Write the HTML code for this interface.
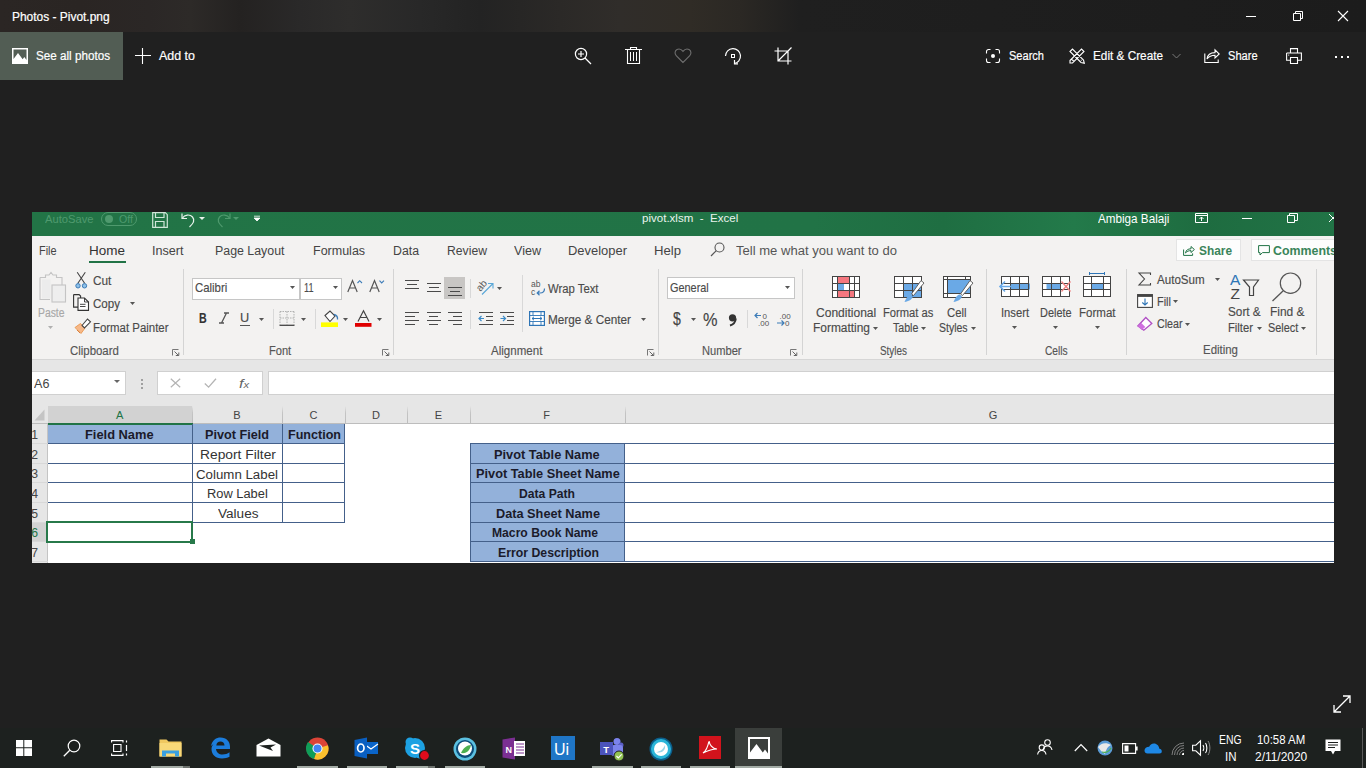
<!DOCTYPE html>
<html><head><meta charset="utf-8"><style>
html,body{margin:0;padding:0;}
body{width:1366px;height:768px;overflow:hidden;position:relative;background:#202020;font-family:"Liberation Sans",sans-serif;}
.t{position:absolute;white-space:nowrap;transform-origin:0 0;}
svg{overflow:visible;}
</style></head><body>
<div style="position:absolute;left:0px;top:0px;width:1366px;height:32px;background:linear-gradient(90deg,#2b2624 0px,#2a2523 80px,#2b2726 150px,#2d2a28 190px,#242221 240px,#2a2929 300px,#2e2d2c 350px,#282828 420px,#232323 480px,#2b2927 560px,#302d2a 620px,#302c26 690px,#2b2824 740px,#1f1f1f 800px,#1c1c1c 1366px);"></div>
<div class="t" style="left:12.30px;top:12.00px;font-size:11.92px;line-height:11.92px;color:#ffffff;font-weight:400;transform:scaleX(1.0032);-webkit-text-stroke:0.2px #fff;">Photos - Pivot.png</div>
<svg style="position:absolute;left:1246px;top:16px;" width="10" height="1" viewBox="0 0 10 1"><rect x="0" y="0" width="10" height="1" fill="#fff"/></svg>
<svg style="position:absolute;left:1291px;top:10px;" width="12" height="12" viewBox="0 0 12 12"><path d="M2.5 3.5h7v7h-7z M4.5 3.5v-2h7v7h-2" fill="none" stroke="#fff" stroke-width="1"/></svg>
<svg style="position:absolute;left:1337px;top:10px;" width="12" height="12" viewBox="0 0 12 12"><path d="M1 1L11 11M11 1L1 11" stroke="#fff" stroke-width="1.1"/></svg>
<div style="position:absolute;left:0px;top:32px;width:123px;height:48px;background:#525d54;"></div>
<svg style="position:absolute;left:12px;top:48px;" width="16" height="16" viewBox="0 0 16 16"><rect x="0" y="0" width="16" height="16" fill="#fff"/><path d="M1.5 1.5h13v10.5l-2.2-3-1.6 2.2L6 5 1.5 11z" fill="#525d54"/></svg>
<div class="t" style="left:36.00px;top:49.00px;font-size:13.08px;line-height:13.08px;color:#ffffff;font-weight:400;transform:scaleX(0.8925);-webkit-text-stroke:0.2px #fff;">See all photos</div>
<svg style="position:absolute;left:135px;top:48px;" width="16" height="16" viewBox="0 0 16 16"><path d="M7.5 0v16M0 7.5h16" stroke="#fff" stroke-width="1.1"/></svg>
<div class="t" style="left:159.00px;top:49.00px;font-size:13.08px;line-height:13.08px;color:#ffffff;font-weight:400;transform:scaleX(0.9519);-webkit-text-stroke:0.2px #fff;">Add to</div>
<svg style="position:absolute;left:574px;top:47px;" width="18" height="18" viewBox="0 0 18 18"><circle cx="7" cy="7" r="5.6" fill="none" stroke="#fff" stroke-width="1.2"/><path d="M7 4v6M4 7h6" stroke="#fff" stroke-width="1.2"/><path d="M11 11l6 6" stroke="#fff" stroke-width="1.3"/></svg>
<svg style="position:absolute;left:625px;top:47px;" width="17" height="18" viewBox="0 0 17 18"><path d="M5.5 2.5V0.5h6v2M0 2.5h17M2.5 2.5v14h12v-14" fill="none" stroke="#fff" stroke-width="1.1"/><path d="M5.5 5v9M8.5 5v9M11.5 5v9" stroke="#fff" stroke-width="1"/></svg>
<svg style="position:absolute;left:674px;top:47px;" width="18" height="18" viewBox="0 0 18 18"><path d="M9 15.5L2.2 8.6C0.4 6.8 0.8 3.6 3 2.5 5 1.5 7.4 2.3 9 4.4 10.6 2.3 13 1.5 15 2.5 17.2 3.6 17.6 6.8 15.8 8.6z" fill="none" stroke="#6e6e6e" stroke-width="1.1"/></svg>
<svg style="position:absolute;left:724px;top:47px;" width="18" height="18" viewBox="0 0 18 18"><path d="M1.5 9A7.5 7.5 0 1 1 10 16.5" fill="none" stroke="#fff" stroke-width="1.2"/><path d="M10.5 13v3.8h3.5" fill="none" stroke="#fff" stroke-width="1.2"/><rect x="7.5" y="7.5" width="3" height="3" fill="none" stroke="#fff" stroke-width="1"/></svg>
<svg style="position:absolute;left:774px;top:47px;" width="18" height="18" viewBox="0 0 18 18"><path d="M4 0.5v13.5h13.5M0.5 4h13.5v13.5M17.5 0.5L4 14" fill="none" stroke="#fff" stroke-width="1.2"/></svg>
<svg style="position:absolute;left:986px;top:49px;" width="14" height="14" viewBox="0 0 14 14"><path d="M0.5 4.5V2.5a2 2 0 0 1 2-2h2M9.5 0.5h2a2 2 0 0 1 2 2v2M13.5 9.5v2a2 2 0 0 1-2 2h-2M4.5 13.5h-2a2 2 0 0 1-2-2v-2" fill="none" stroke="#fff" stroke-width="1.1"/><circle cx="7" cy="7" r="2" fill="#fff"/></svg>
<div class="t" style="left:1009.00px;top:49.00px;font-size:13.08px;line-height:13.08px;color:#ffffff;font-weight:400;transform:scaleX(0.8446);-webkit-text-stroke:0.2px #fff;">Search</div>
<svg style="position:absolute;left:1069px;top:48px;" width="16" height="16" viewBox="0 0 16 16"><path d="M1 3.5L3.5 1l11 11 0.8 3.3-3.3-0.8z M12 12.5L12.5 12M1 12.5L12.5 1 15 3.5 3.5 15H1z M2.5 11l2.5 2.5" fill="none" stroke="#fff" stroke-width="1.1"/></svg>
<div class="t" style="left:1093.00px;top:49.00px;font-size:13.08px;line-height:13.08px;color:#ffffff;font-weight:400;transform:scaleX(0.8998);-webkit-text-stroke:0.2px #fff;">Edit &amp; Create</div>
<svg style="position:absolute;left:1172px;top:53px;" width="9" height="6" viewBox="0 0 9 6"><path d="M0.5 1l4 4 4-4" fill="none" stroke="#7a7a7a" stroke-width="1"/></svg>
<svg style="position:absolute;left:1204px;top:48px;" width="16" height="15" viewBox="0 0 16 15"><path d="M0.8 5.5v9h13.4v-3M3 11c0.5-4 3.2-6.4 8-6.4V1.8l4.2 4.2L11 10V7.2c-3.5 0-6 1-8 3.8z" fill="none" stroke="#fff" stroke-width="1.1"/></svg>
<div class="t" style="left:1228.00px;top:49.00px;font-size:13.08px;line-height:13.08px;color:#ffffff;font-weight:400;transform:scaleX(0.8481);-webkit-text-stroke:0.2px #fff;">Share</div>
<svg style="position:absolute;left:1286px;top:48px;" width="16" height="16" viewBox="0 0 16 16"><path d="M4.5 5V0.6h7V5M0.6 5h14.8v7.3H11.5M4.5 12.3H0.6V5M4.5 9.5h7v6h-7z" fill="none" stroke="#fff" stroke-width="1.1"/><rect x="2.2" y="6.6" width="1" height="1" fill="#fff"/></svg>
<div style="position:absolute;left:1335px;top:56px;width:2px;height:2px;background:#fff;"></div>
<div style="position:absolute;left:1341px;top:56px;width:2px;height:2px;background:#fff;"></div>
<div style="position:absolute;left:1347px;top:56px;width:2px;height:2px;background:#fff;"></div>
<svg style="position:absolute;left:1332px;top:694px;" width="20" height="20" viewBox="0 0 20 20"><path d="M2 18L18 2M11 2h7v7M2 11v7h7" fill="none" stroke="#fff" stroke-width="1.3"/></svg>
<div style="position:absolute;left:32px;top:212px;width:1302px;height:351px;background:#ffffff;overflow:hidden;"></div>
<div style="position:absolute;left:32px;top:212px;width:1302px;height:24px;background:linear-gradient(90deg,#227446 0%,#217346 60%,#1f6e42 70%,#237a4a 80%,#1e6c40 90%,#217346 100%);"></div>
<div class="t" style="left:45.00px;top:214.00px;font-size:11.05px;line-height:11.05px;color:#4f9a6e;font-weight:400;transform:scaleX(1.0126);">AutoSave</div>
<div style="position:absolute;left:101px;top:212px;width:36px;height:14px;border:1.3px solid #4f9a6e;border-radius:8px;box-sizing:border-box;"></div>
<div style="position:absolute;left:105px;top:215px;width:8px;height:8px;background:#4f9a6e;border-radius:50%;"></div>
<div class="t" style="left:119.00px;top:215.00px;font-size:10.17px;line-height:10.17px;color:#4f9a6e;font-weight:400;transform:scaleX(1.0440);">Off</div>
<svg style="position:absolute;left:152px;top:212px;" width="16" height="16" viewBox="0 0 16 16"><path d="M0.7 0.7h12.6l2 2v12.6H0.7z M3.5 0.7v4.8h8.5V0.7 M3.5 15.3V9.5h8.5v5.8" fill="none" stroke="#cfe6d8" stroke-width="1.2"/></svg>
<svg style="position:absolute;left:180px;top:212px;" width="18" height="16" viewBox="0 0 18 16"><path d="M2 1.5v5h5" fill="none" stroke="#e8f3ec" stroke-width="1.2"/><path d="M2.5 6C4.5 2.5 10 2 12.5 5c2.3 2.8 1.5 6-3 10" fill="none" stroke="#e8f3ec" stroke-width="1.2"/></svg>
<svg style="position:absolute;left:199px;top:217px;" width="6" height="3" viewBox="0 0 6 3"><path d="M0 0h6L3 3z" fill="#e8f3ec"/></svg>
<svg style="position:absolute;left:214px;top:212px;" width="18" height="16" viewBox="0 0 18 16"><path d="M16 1.5v5h-5" fill="none" stroke="#4f9a6e" stroke-width="1.2"/><path d="M15.5 6C13.5 2.5 8 2 5.5 5c-2.3 2.8-1.5 6 3 10" fill="none" stroke="#4f9a6e" stroke-width="1.2"/></svg>
<svg style="position:absolute;left:233px;top:217px;" width="6" height="3" viewBox="0 0 6 3"><path d="M0 0h6L3 3z" fill="#4f9a6e"/></svg>
<svg style="position:absolute;left:254px;top:215px;" width="6" height="8" viewBox="0 0 6 8"><path d="M0 1.2h6M0 3h6L3 6z" fill="#fff" stroke="#fff" stroke-width="0.8"/></svg>
<div class="t" style="left:642.40px;top:213.00px;font-size:11.05px;line-height:11.05px;color:#eaf4ee;font-weight:400;transform:scaleX(1.0448);">pivot.xlsm&nbsp; - &nbsp;Excel</div>
<div class="t" style="left:1098.00px;top:214.00px;font-size:11.92px;line-height:11.92px;color:#ffffff;font-weight:400;transform:scaleX(0.9812);">Ambiga Balaji</div>
<svg style="position:absolute;left:1195px;top:213px;" width="13" height="10" viewBox="0 0 13 10"><path d="M0.5 0.5h12v9h-12z M0.5 2.5h12 M6.5 8V4M4.5 6l2-2 2 2" fill="none" stroke="#fff" stroke-width="1"/></svg>
<div style="position:absolute;left:1242px;top:218px;width:10px;height:1px;background:#fff;"></div>
<svg style="position:absolute;left:1287px;top:213px;" width="11" height="10" viewBox="0 0 11 10"><path d="M0.5 2.5h7v7h-7z M2.5 2.5v-2h8v7h-3" fill="none" stroke="#fff" stroke-width="1"/></svg>
<svg style="position:absolute;left:1328px;top:213px;" width="6" height="10" viewBox="0 0 6 10"><path d="M1 1l8 8M9 1L1 9" stroke="#fff" stroke-width="1"/></svg>
<div style="position:absolute;left:32px;top:236px;width:1302px;height:123px;background:#f3f2f1;"></div>
<div class="t" style="left:39.40px;top:245.00px;font-size:12.50px;line-height:12.50px;color:#444444;font-weight:400;transform:scaleX(0.8740);">File</div>
<div class="t" style="left:89.00px;top:245.00px;font-size:12.50px;line-height:12.50px;color:#333333;font-weight:400;transform:scaleX(1.0795);">Home</div>
<div class="t" style="left:152.00px;top:245.00px;font-size:12.50px;line-height:12.50px;color:#444444;font-weight:400;transform:scaleX(1.0076);">Insert</div>
<div class="t" style="left:214.80px;top:245.00px;font-size:12.50px;line-height:12.50px;color:#444444;font-weight:400;transform:scaleX(0.9900);">Page Layout</div>
<div class="t" style="left:313.00px;top:245.00px;font-size:12.50px;line-height:12.50px;color:#444444;font-weight:400;">Formulas</div>
<div class="t" style="left:393.00px;top:245.00px;font-size:12.50px;line-height:12.50px;color:#444444;font-weight:400;transform:scaleX(0.9844);">Data</div>
<div class="t" style="left:447.00px;top:245.00px;font-size:12.50px;line-height:12.50px;color:#444444;font-weight:400;transform:scaleX(0.9750);">Review</div>
<div class="t" style="left:514.00px;top:245.00px;font-size:12.50px;line-height:12.50px;color:#444444;font-weight:400;transform:scaleX(1.0037);">View</div>
<div class="t" style="left:568.00px;top:245.00px;font-size:12.50px;line-height:12.50px;color:#444444;font-weight:400;transform:scaleX(1.0355);">Developer</div>
<div class="t" style="left:654.00px;top:245.00px;font-size:12.50px;line-height:12.50px;color:#444444;font-weight:400;transform:scaleX(1.0501);">Help</div>
<div style="position:absolute;left:89px;top:260.6px;width:37px;height:2.6px;background:#217346;"></div>
<svg style="position:absolute;left:710px;top:242px;" width="15" height="15" viewBox="0 0 15 15"><circle cx="9.5" cy="5.5" r="4.5" fill="none" stroke="#555" stroke-width="1.1"/><path d="M6.3 8.7L1 14" stroke="#555" stroke-width="1.2"/></svg>
<div class="t" style="left:736.00px;top:245.00px;font-size:12.50px;line-height:12.50px;color:#555555;font-weight:400;transform:scaleX(1.0438);">Tell me what you want to do</div>
<div style="position:absolute;left:1176px;top:239.4px;width:65.4px;height:22px;background:#fdfdfd;border:1px solid #e4e4e4;box-sizing:border-box;"></div>
<svg style="position:absolute;left:1183px;top:245px;" width="12" height="11" viewBox="0 0 12 11"><path d="M0.6 4.5v5.9h9v-2M2.5 8C3 5 5 3.8 8 3.8V1.5l3.4 3-3.4 3V5.6C5.6 5.6 4 6.3 2.5 8z" fill="none" stroke="#217346" stroke-width="1"/></svg>
<div class="t" style="left:1199.00px;top:245.00px;font-size:12.21px;line-height:12.21px;color:#3a845a;font-weight:700;transform:scaleX(0.9726);">Share</div>
<div style="position:absolute;left:1251px;top:239.4px;width:90px;height:22px;background:#fdfdfd;border:1px solid #e4e4e4;box-sizing:border-box;"></div>
<svg style="position:absolute;left:1258px;top:245px;" width="12" height="11" viewBox="0 0 12 11"><path d="M0.6 0.6h10.8v7H4.5L2 10V7.6H0.6z" fill="none" stroke="#217346" stroke-width="1"/></svg>
<div class="t" style="left:1273.00px;top:245.00px;font-size:12.21px;line-height:12.21px;color:#3a845a;font-weight:700;transform:scaleX(1.0143);">Comments</div>
<div style="position:absolute;left:1334px;top:236px;width:32px;height:30px;background:#202020;"></div>
<svg style="position:absolute;left:39px;top:272px;" width="28" height="31" viewBox="0 0 28 31"><path d="M1 5.5h5.5V3h3.5l2-2.5 2 2.5h3.5v2.5H23V14" fill="none" stroke="#c4c4c4" stroke-width="1.1"/><path d="M1 5.5v22h10" fill="none" stroke="#c4c4c4" stroke-width="1.1"/><rect x="13" y="13" width="13.5" height="17" fill="#eeeeee" stroke="#c4c4c4" stroke-width="1.1"/><rect x="3" y="7.5" width="8.5" height="19" fill="#ececec"/></svg>
<div class="t" style="left:37.50px;top:307.00px;font-size:12.21px;line-height:12.21px;color:#a8a8a8;font-weight:400;transform:scaleX(0.8488);-webkit-text-stroke:0.15px #a8a8a8;">Paste</div>
<svg style="position:absolute;left:47.5px;top:326.3px;" width="5" height="3" viewBox="0 0 5 3"><path d="M0 0h5L2.5 3z" fill="#b0b0b0"/></svg>
<svg style="position:absolute;left:75px;top:272px;" width="13" height="17" viewBox="0 0 13 17"><path d="M2.2 0.3L9.8 11.5M10.3 0.3L2.7 11.5" stroke="#444" stroke-width="1.1"/><circle cx="3" cy="13.8" r="2.2" fill="#8fc1e8" stroke="#3d7cb8" stroke-width="1"/><circle cx="9.5" cy="13.8" r="2.2" fill="#8fc1e8" stroke="#3d7cb8" stroke-width="1"/></svg>
<div class="t" style="left:93.00px;top:275.00px;font-size:12.21px;line-height:12.21px;color:#4a4a4a;font-weight:400;transform:scaleX(0.9685);-webkit-text-stroke:0.15px #4a4a4a;">Cut</div>
<svg style="position:absolute;left:73px;top:294px;" width="17" height="17" viewBox="0 0 17 17"><path d="M0.6 0.6h5.5l1.5 1.5V4 M0.6 0.6v12.5h5" fill="none" stroke="#333" stroke-width="1.1"/><path d="M5 4h6.5l4 4v8.4H5z" fill="#fff" stroke="#333" stroke-width="1.1"/><path d="M7 10.3h5.5M7 12.5h5.5M11.5 4v4h4" fill="none" stroke="#333" stroke-width="0.9"/></svg>
<div class="t" style="left:93.00px;top:298.00px;font-size:12.21px;line-height:12.21px;color:#4a4a4a;font-weight:400;transform:scaleX(0.9475);-webkit-text-stroke:0.15px #4a4a4a;">Copy</div>
<svg style="position:absolute;left:129.8px;top:302.2px;" width="5" height="3" viewBox="0 0 5 3"><path d="M0 0h5L2.5 3z" fill="#555"/></svg>
<svg style="position:absolute;left:74px;top:318px;" width="17" height="16" viewBox="0 0 17 16"><path d="M1 9.5L6.5 5.5 11 10 7 15.5z" fill="#f6b889"/><path d="M1 9.5L6.5 5.5 11 10 7 15.5z" fill="none" stroke="#e8964f" stroke-width="0.9"/><path d="M3 12l3 3" stroke="#d9823f" stroke-width="1"/><path d="M8 7.5l5.5-6.5 3 2.8-6 6.2z" fill="#fff" stroke="#444" stroke-width="1.1"/></svg>
<div class="t" style="left:93.20px;top:322.00px;font-size:12.21px;line-height:12.21px;color:#4a4a4a;font-weight:400;transform:scaleX(0.9351);-webkit-text-stroke:0.15px #4a4a4a;">Format Painter</div>
<div class="t" style="left:69.80px;top:345.00px;font-size:12.21px;line-height:12.21px;color:#555555;font-weight:400;transform:scaleX(0.9339);-webkit-text-stroke:0.15px #555555;">Clipboard</div>
<svg style="position:absolute;left:172px;top:348.5px;" width="8" height="7" viewBox="0 0 8 7"><path d="M0.5 6.5V0.5h6" fill="none" stroke="#777" stroke-width="1"/><path d="M2.5 2.5l4 4M3.8 6.5h3v-3" fill="none" stroke="#666" stroke-width="1"/></svg>
<div style="position:absolute;left:183px;top:269px;width:1px;height:86px;background:#d4d4d4;"></div>
<div style="position:absolute;left:192px;top:277.5px;width:108px;height:22px;background:#fff;border:1px solid #c6c6c6;box-sizing:border-box;"></div>
<div style="position:absolute;left:300px;top:277.5px;width:42px;height:22px;background:#fff;border:1px solid #c6c6c6;box-sizing:border-box;"></div>
<div class="t" style="left:195.00px;top:282.00px;font-size:12.79px;line-height:12.79px;color:#4a4a4a;font-weight:400;transform:scaleX(0.8911);-webkit-text-stroke:0.15px #4a4a4a;">Calibri</div>
<svg style="position:absolute;left:290.2px;top:286.3px;" width="5" height="3" viewBox="0 0 5 3"><path d="M0 0h5L2.5 3z" fill="#555"/></svg>
<div class="t" style="left:304.00px;top:282.00px;font-size:12.79px;line-height:12.79px;color:#4a4a4a;font-weight:400;transform:scaleX(0.7155);-webkit-text-stroke:0.15px #4a4a4a;">11</div>
<svg style="position:absolute;left:332.5px;top:286.3px;" width="5" height="3" viewBox="0 0 5 3"><path d="M0 0h5L2.5 3z" fill="#555"/></svg>
<svg style="position:absolute;left:347px;top:279px;" width="16" height="14" viewBox="0 0 16 14"><path d="M0.8 13L5.5 1.5 10.2 13M2.5 9h6" fill="none" stroke="#555" stroke-width="1.2"/><path d="M10.5 4l2.2-2.3L15 4" fill="none" stroke="#3d7cb8" stroke-width="1.1"/></svg>
<svg style="position:absolute;left:369px;top:279px;" width="16" height="14" viewBox="0 0 16 14"><path d="M0.8 13L5.5 1.5 10.2 13M2.5 9h6" fill="none" stroke="#555" stroke-width="1.2"/><path d="M10.5 1.7l2.2 2.3L15 1.7" fill="none" stroke="#3d7cb8" stroke-width="1.1"/></svg>
<div class="t" style="left:198.80px;top:311.00px;font-size:14.53px;line-height:14.53px;color:#333;font-weight:700;transform:scaleX(0.7337);-webkit-text-stroke:0.15px #333;">B</div>
<svg style="position:absolute;left:219px;top:312px;" width="10" height="12" viewBox="0 0 10 12"><path d="M5 1h5M0 11h5M7.5 1L2.5 11" stroke="#555" stroke-width="1.3"/></svg>
<div class="t" style="left:240.40px;top:311.00px;font-size:13.66px;line-height:13.66px;color:#4a4a4a;font-weight:400;transform:scaleX(0.9326);-webkit-text-stroke:0.15px #4a4a4a;">U</div>
<div style="position:absolute;left:240px;top:324.5px;width:10px;height:1.2px;background:#555;"></div>
<svg style="position:absolute;left:258.9px;top:317.5px;" width="5" height="3" viewBox="0 0 5 3"><path d="M0 0h5L2.5 3z" fill="#555"/></svg>
<div style="position:absolute;left:272.7px;top:309.4px;width:1px;height:19.200000000000045px;background:#d8d8d8;"></div>
<svg style="position:absolute;left:279px;top:310px;" width="16" height="16" viewBox="0 0 16 16"><path d="M1 1.5h14M1 8h14M8 1.5v13M1 1.5v13M15 1.5v13" fill="none" stroke="#aaa" stroke-width="0.9" stroke-dasharray="1.5 1"/><path d="M0.5 15.3h15" stroke="#444" stroke-width="1.3"/></svg>
<svg style="position:absolute;left:300.9px;top:317.5px;" width="5" height="3" viewBox="0 0 5 3"><path d="M0 0h5L2.5 3z" fill="#555"/></svg>
<div style="position:absolute;left:314.6px;top:309.4px;width:1px;height:19.200000000000045px;background:#d8d8d8;"></div>
<svg style="position:absolute;left:321px;top:310px;" width="18" height="17" viewBox="0 0 18 17"><path d="M4 5.5l5-4.5 5 5-5 5.5z" fill="#fff" stroke="#444" stroke-width="1.1"/><path d="M13 4.5c2.5 0.5 3.8 2.5 3.5 5" fill="none" stroke="#3d7cb8" stroke-width="1.3"/><rect x="0" y="12.4" width="17" height="4.6" fill="#ffff00"/></svg>
<svg style="position:absolute;left:343.2px;top:317.5px;" width="5" height="3" viewBox="0 0 5 3"><path d="M0 0h5L2.5 3z" fill="#555"/></svg>
<svg style="position:absolute;left:355px;top:310px;" width="17" height="17" viewBox="0 0 17 17"><path d="M3 11.5L8.5 0.8 14 11.5M5 7.5h7" fill="none" stroke="#444" stroke-width="1.2"/><rect x="0" y="13" width="16.5" height="3.8" fill="#e00000"/></svg>
<svg style="position:absolute;left:377.1px;top:317.5px;" width="5" height="3" viewBox="0 0 5 3"><path d="M0 0h5L2.5 3z" fill="#555"/></svg>
<div class="t" style="left:268.80px;top:345.00px;font-size:12.21px;line-height:12.21px;color:#555555;font-weight:400;transform:scaleX(0.9087);-webkit-text-stroke:0.15px #555555;">Font</div>
<svg style="position:absolute;left:381.5px;top:348.5px;" width="8" height="7" viewBox="0 0 8 7"><path d="M0.5 6.5V0.5h6" fill="none" stroke="#777" stroke-width="1"/><path d="M2.5 2.5l4 4M3.8 6.5h3v-3" fill="none" stroke="#666" stroke-width="1"/></svg>
<div style="position:absolute;left:392.5px;top:269px;width:1px;height:86px;background:#d4d4d4;"></div>
<div style="position:absolute;left:405px;top:280px;width:14px;height:1.3px;background:#4a4a4a;"></div>
<div style="position:absolute;left:407px;top:284px;width:10px;height:1.3px;background:#4a4a4a;"></div>
<div style="position:absolute;left:405px;top:288px;width:14px;height:1.3px;background:#4a4a4a;"></div>
<div style="position:absolute;left:426.5px;top:283px;width:14.0px;height:1.3px;background:#4a4a4a;"></div>
<div style="position:absolute;left:428.5px;top:287px;width:10.0px;height:1.3px;background:#4a4a4a;"></div>
<div style="position:absolute;left:426.5px;top:291px;width:14.0px;height:1.3px;background:#4a4a4a;"></div>
<div style="position:absolute;left:444.2px;top:277px;width:21.3px;height:22px;background:#c8c6c4;"></div>
<div style="position:absolute;left:448px;top:287px;width:14px;height:1.3px;background:#4a4a4a;"></div>
<div style="position:absolute;left:450px;top:291px;width:10px;height:1.3px;background:#4a4a4a;"></div>
<div style="position:absolute;left:448px;top:295px;width:14px;height:1.3px;background:#4a4a4a;"></div>
<div style="position:absolute;left:469.7px;top:278.8px;width:1px;height:18.80000000000001px;background:#d8d8d8;"></div>
<svg style="position:absolute;left:477px;top:279px;" width="18" height="17" viewBox="0 0 18 17"><text x="0" y="0" font-size="10" fill="#555" transform="translate(3.5 13) rotate(-50)" font-family="Liberation Sans">ab</text><path d="M5 15.5L15.5 5M11 4.5h5v5" fill="none" stroke="#5aa8d8" stroke-width="1.1"/></svg>
<svg style="position:absolute;left:496.8px;top:286.5px;" width="5" height="3" viewBox="0 0 5 3"><path d="M0 0h5L2.5 3z" fill="#555"/></svg>
<div style="position:absolute;left:521.8px;top:275px;width:1px;height:57px;background:#d8d8d8;"></div>
<svg style="position:absolute;left:531px;top:280px;" width="15" height="16" viewBox="0 0 15 16"><text x="0" y="7" font-size="8.5" fill="#555" font-family="Liberation Sans">ab</text><text x="0" y="14.5" font-size="8.5" fill="#555" font-family="Liberation Sans">c</text><path d="M13.5 8.5c0 3-1 4.5-4.5 4.5H6.5M8.5 10.8L6.2 13l2.3 2.2" fill="none" stroke="#3d7cb8" stroke-width="1.2"/></svg>
<div class="t" style="left:548.00px;top:283.00px;font-size:12.50px;line-height:12.50px;color:#4a4a4a;font-weight:400;transform:scaleX(0.9048);-webkit-text-stroke:0.15px #4a4a4a;">Wrap Text</div>
<div style="position:absolute;left:405px;top:312px;width:14px;height:1.3px;background:#4a4a4a;"></div>
<div style="position:absolute;left:426.5px;top:312px;width:14.0px;height:1.3px;background:#4a4a4a;"></div>
<div style="position:absolute;left:448px;top:312px;width:14px;height:1.3px;background:#4a4a4a;"></div>
<div style="position:absolute;left:405px;top:316px;width:9.5px;height:1.3px;background:#4a4a4a;"></div>
<div style="position:absolute;left:429px;top:316px;width:9px;height:1.3px;background:#4a4a4a;"></div>
<div style="position:absolute;left:452.5px;top:316px;width:9.5px;height:1.3px;background:#4a4a4a;"></div>
<div style="position:absolute;left:405px;top:320px;width:14px;height:1.3px;background:#4a4a4a;"></div>
<div style="position:absolute;left:426.5px;top:320px;width:14.0px;height:1.3px;background:#4a4a4a;"></div>
<div style="position:absolute;left:448px;top:320px;width:14px;height:1.3px;background:#4a4a4a;"></div>
<div style="position:absolute;left:405px;top:324px;width:9.5px;height:1.3px;background:#4a4a4a;"></div>
<div style="position:absolute;left:429px;top:324px;width:9px;height:1.3px;background:#4a4a4a;"></div>
<div style="position:absolute;left:452.5px;top:324px;width:9.5px;height:1.3px;background:#4a4a4a;"></div>
<div style="position:absolute;left:470px;top:309.5px;width:1px;height:19.5px;background:#d8d8d8;"></div>
<div style="position:absolute;left:479px;top:312px;width:13.5px;height:1.3px;background:#4a4a4a;"></div>
<div style="position:absolute;left:485.5px;top:316px;width:7.0px;height:1.3px;background:#4a4a4a;"></div>
<div style="position:absolute;left:485.5px;top:320px;width:7.0px;height:1.3px;background:#4a4a4a;"></div>
<div style="position:absolute;left:479px;top:324px;width:13.5px;height:1.3px;background:#4a4a4a;"></div>
<svg style="position:absolute;left:478px;top:315px;" width="7" height="7" viewBox="0 0 7 7"><path d="M6 3.5H1M3.5 1L1 3.5 3.5 6" fill="none" stroke="#3d8cc8" stroke-width="1.2"/></svg>
<div style="position:absolute;left:500px;top:312px;width:14px;height:1.3px;background:#4a4a4a;"></div>
<div style="position:absolute;left:507px;top:316px;width:7px;height:1.3px;background:#4a4a4a;"></div>
<div style="position:absolute;left:507px;top:320px;width:7px;height:1.3px;background:#4a4a4a;"></div>
<div style="position:absolute;left:500px;top:324px;width:14px;height:1.3px;background:#4a4a4a;"></div>
<svg style="position:absolute;left:499.5px;top:315px;" width="7" height="7" viewBox="0 0 7 7"><path d="M0.5 3.5H5.5M3 1l2.5 2.5L3 6" fill="none" stroke="#3d8cc8" stroke-width="1.2"/></svg>
<svg style="position:absolute;left:529px;top:311px;" width="16" height="15" viewBox="0 0 16 15"><rect x="0.6" y="0.6" width="14.8" height="13.8" fill="#fff" stroke="#2e75b6" stroke-width="1.2"/><path d="M0.6 4.5h14.8M0.6 10.5h14.8M4 0.6v3.9M12 0.6v3.9M4 10.5v3.9M12 10.5v3.9" stroke="#2e75b6" stroke-width="0.9"/><path d="M3 7.5h10M5 5.8L3 7.5l2 1.7M11 5.8l2 1.7-2 1.7" fill="none" stroke="#2e75b6" stroke-width="1"/></svg>
<div class="t" style="left:548.00px;top:314.00px;font-size:12.50px;line-height:12.50px;color:#4a4a4a;font-weight:400;transform:scaleX(0.9406);-webkit-text-stroke:0.15px #4a4a4a;">Merge &amp; Center</div>
<svg style="position:absolute;left:640.5px;top:318.2px;" width="5" height="3" viewBox="0 0 5 3"><path d="M0 0h5L2.5 3z" fill="#555"/></svg>
<div class="t" style="left:491.40px;top:345.00px;font-size:12.21px;line-height:12.21px;color:#555555;font-weight:400;transform:scaleX(0.9467);-webkit-text-stroke:0.15px #555555;">Alignment</div>
<svg style="position:absolute;left:647px;top:348.5px;" width="8" height="7" viewBox="0 0 8 7"><path d="M0.5 6.5V0.5h6" fill="none" stroke="#777" stroke-width="1"/><path d="M2.5 2.5l4 4M3.8 6.5h3v-3" fill="none" stroke="#666" stroke-width="1"/></svg>
<div style="position:absolute;left:657.8px;top:269px;width:1px;height:86px;background:#d4d4d4;"></div>
<div style="position:absolute;left:666.5px;top:277px;width:128.2px;height:22.2px;background:#fff;border:1px solid #c6c6c6;box-sizing:border-box;"></div>
<div class="t" style="left:669.60px;top:282.00px;font-size:12.79px;line-height:12.79px;color:#4a4a4a;font-weight:400;transform:scaleX(0.8526);-webkit-text-stroke:0.15px #4a4a4a;">General</div>
<svg style="position:absolute;left:784.5px;top:286.3px;" width="5" height="3" viewBox="0 0 5 3"><path d="M0 0h5L2.5 3z" fill="#555"/></svg>
<div class="t" style="left:672.60px;top:311.00px;font-size:17.44px;line-height:17.44px;color:#444;font-weight:400;transform:scaleX(0.8043);-webkit-text-stroke:0.15px #444;">$</div>
<svg style="position:absolute;left:690.9px;top:317.8px;" width="5" height="3" viewBox="0 0 5 3"><path d="M0 0h5L2.5 3z" fill="#555"/></svg>
<div class="t" style="left:703.00px;top:310.00px;font-size:19.19px;line-height:19.19px;color:#444;font-weight:400;transform:scaleX(0.8501);-webkit-text-stroke:0.15px #444;">%</div>
<svg style="position:absolute;left:728px;top:314px;" width="9" height="12" viewBox="0 0 9 12"><circle cx="4.5" cy="3.8" r="3.6" fill="#333"/><path d="M7.8 4.5C7.5 8 5.5 10.5 2 11.5" fill="none" stroke="#333" stroke-width="2"/></svg>
<div style="position:absolute;left:747.4px;top:309.6px;width:1px;height:18.19999999999999px;background:#d8d8d8;"></div>
<svg style="position:absolute;left:754px;top:311px;" width="17" height="16" viewBox="0 0 17 16"><path d="M7 4.5H1M3.5 2L1 4.5 3.5 7" fill="none" stroke="#3d7cb8" stroke-width="1.2"/><text x="8.5" y="7.8" font-size="8" fill="#555" font-family="Liberation Sans">0</text><text x="4" y="14.5" font-size="8" fill="#555" font-family="Liberation Sans">.00</text></svg>
<svg style="position:absolute;left:775.5px;top:311px;" width="17" height="16" viewBox="0 0 17 16"><text x="3.5" y="7.5" font-size="8" fill="#555" font-family="Liberation Sans">.00</text><path d="M1 12h7M5.5 9.5L8 12l-2.5 2.5" fill="none" stroke="#3d7cb8" stroke-width="1.2"/><text x="9" y="14.8" font-size="8" fill="#555" font-family="Liberation Sans">0</text></svg>
<div class="t" style="left:702.00px;top:345.00px;font-size:12.21px;line-height:12.21px;color:#555555;font-weight:400;transform:scaleX(0.9118);-webkit-text-stroke:0.15px #555555;">Number</div>
<svg style="position:absolute;left:790.4px;top:348.5px;" width="8" height="7" viewBox="0 0 8 7"><path d="M0.5 6.5V0.5h6" fill="none" stroke="#777" stroke-width="1"/><path d="M2.5 2.5l4 4M3.8 6.5h3v-3" fill="none" stroke="#666" stroke-width="1"/></svg>
<div style="position:absolute;left:801.9px;top:269px;width:1px;height:86px;background:#d4d4d4;"></div>
<svg style="position:absolute;left:832px;top:276px;" width="28" height="22" viewBox="0 0 28 22"><rect x="0.5" y="0.5" width="27" height="21" fill="#fff"/><rect x="5" y="1" width="12.5" height="6.5" fill="#f4777f"/><rect x="5" y="14.5" width="17.5" height="7" fill="#f4777f"/><rect x="5" y="7.5" width="7" height="7" fill="#6aa9e6"/><path d="M0.5 0.5h27v21h-27z M0.5 7.5h27M0.5 14.5h27M5.5 0.5v21M17.5 0.5v21M22.5 0.5v21" stroke="#444" stroke-width="1" fill="none" shape-rendering="crispEdges"/></svg>
<div class="t" style="left:815.60px;top:307.00px;font-size:12.50px;line-height:12.50px;color:#4a4a4a;font-weight:400;transform:scaleX(0.9626);-webkit-text-stroke:0.15px #4a4a4a;">Conditional</div>
<div class="t" style="left:812.50px;top:322.00px;font-size:12.50px;line-height:12.50px;color:#4a4a4a;font-weight:400;transform:scaleX(0.9542);-webkit-text-stroke:0.15px #4a4a4a;">Formatting</div>
<svg style="position:absolute;left:872.5px;top:326.5px;" width="5" height="3" viewBox="0 0 5 3"><path d="M0 0h5L2.5 3z" fill="#555"/></svg>
<svg style="position:absolute;left:894px;top:276px;" width="31" height="27" viewBox="0 0 31 27"><rect x="0.5" y="0.5" width="27" height="21" fill="#fff"/><rect x="9.5" y="7.5" width="18" height="14" fill="#6aa9e6"/><path d="M0.5 0.5h27v21h-27z M0.5 7.5h27M0.5 14.5h27M9.5 0.5v21M18.5 0.5v21" stroke="#444" stroke-width="1" fill="none" shape-rendering="crispEdges"/><path d="M27 4.5L30 7 19.5 19.5 17.5 18z" fill="#fff" stroke="#555" stroke-width="0.9"/><path d="M17 18.5c-2.5 0-4 2-6.5 7.5 4-0.5 7.5-2.5 8.5-5.5z" fill="#6aa9e6"/></svg>
<div class="t" style="left:883.20px;top:307.00px;font-size:12.50px;line-height:12.50px;color:#4a4a4a;font-weight:400;transform:scaleX(0.8940);-webkit-text-stroke:0.15px #4a4a4a;">Format as</div>
<div class="t" style="left:892.90px;top:322.00px;font-size:12.50px;line-height:12.50px;color:#4a4a4a;font-weight:400;transform:scaleX(0.8465);-webkit-text-stroke:0.15px #4a4a4a;">Table</div>
<svg style="position:absolute;left:920.5px;top:326.5px;" width="5" height="3" viewBox="0 0 5 3"><path d="M0 0h5L2.5 3z" fill="#555"/></svg>
<svg style="position:absolute;left:943px;top:276px;" width="31" height="27" viewBox="0 0 31 27"><rect x="0.5" y="0.5" width="27" height="21" fill="#fff"/><rect x="5" y="4" width="22.5" height="13.5" fill="#6aa9e6"/><path d="M0.5 0.5h27v21h-27z M0.5 3.5h27M0.5 17.5h27M4.5 0.5v21M22.5 0.5v3" stroke="#444" stroke-width="1" fill="none" shape-rendering="crispEdges"/><path d="M27 4.5L30 7 19.5 19.5 17.5 18z" fill="#fff" stroke="#555" stroke-width="0.9"/><path d="M17 18.5c-2.5 0-4 2-6.5 7.5 4-0.5 7.5-2.5 8.5-5.5z" fill="#6aa9e6"/></svg>
<div class="t" style="left:947.40px;top:307.00px;font-size:12.50px;line-height:12.50px;color:#4a4a4a;font-weight:400;transform:scaleX(0.9054);-webkit-text-stroke:0.15px #4a4a4a;">Cell</div>
<div class="t" style="left:939.00px;top:322.00px;font-size:12.50px;line-height:12.50px;color:#4a4a4a;font-weight:400;transform:scaleX(0.8402);-webkit-text-stroke:0.15px #4a4a4a;">Styles</div>
<svg style="position:absolute;left:970.7px;top:326.5px;" width="5" height="3" viewBox="0 0 5 3"><path d="M0 0h5L2.5 3z" fill="#555"/></svg>
<div class="t" style="left:880.40px;top:345.00px;font-size:12.21px;line-height:12.21px;color:#555555;font-weight:400;transform:scaleX(0.8121);-webkit-text-stroke:0.15px #555555;">Styles</div>
<div style="position:absolute;left:985.7px;top:269px;width:1px;height:86px;background:#d4d4d4;"></div>
<svg style="position:absolute;left:999px;top:276px;" width="33" height="22" viewBox="0 0 33 22"><rect x="2.5" y="0.5" width="27" height="20" fill="#fff"/><rect x="11.5" y="7.5" width="19.5" height="6" fill="#6aa9e6"/><path d="M2.5 0.5h27v20h-27z M2.5 7.5h27M2.5 13.5h27M11.5 0.5v20M20.5 0.5v20" stroke="#444" stroke-width="1" fill="none" shape-rendering="crispEdges"/><path d="M14 10.5H1.5M6 5.5L1 10.5l5 5" fill="none" stroke="#6aa9e6" stroke-width="1.6"/></svg>
<div class="t" style="left:1000.60px;top:307.00px;font-size:12.50px;line-height:12.50px;color:#4a4a4a;font-weight:400;transform:scaleX(0.8956);-webkit-text-stroke:0.15px #4a4a4a;">Insert</div>
<svg style="position:absolute;left:1012.2px;top:326.3px;" width="5" height="3" viewBox="0 0 5 3"><path d="M0 0h5L2.5 3z" fill="#555"/></svg>
<svg style="position:absolute;left:1042px;top:276px;" width="31" height="22" viewBox="0 0 31 22"><rect x="0.5" y="0.5" width="27" height="20" fill="#fff"/><rect x="4.5" y="7.5" width="14" height="6" fill="#6aa9e6"/><path d="M0.5 0.5h27v20h-27z M0.5 7.5h27M0.5 13.5h27M9.5 0.5v20M18.5 0.5v20" stroke="#444" stroke-width="1" fill="none" shape-rendering="crispEdges"/><path d="M19.5 5.5l9 10M28.5 5.5l-9 10" stroke="#f08080" stroke-width="1.3"/></svg>
<div class="t" style="left:1040.00px;top:307.00px;font-size:12.50px;line-height:12.50px;color:#4a4a4a;font-weight:400;transform:scaleX(0.8744);-webkit-text-stroke:0.15px #4a4a4a;">Delete</div>
<svg style="position:absolute;left:1052.8px;top:326.3px;" width="5" height="3" viewBox="0 0 5 3"><path d="M0 0h5L2.5 3z" fill="#555"/></svg>
<svg style="position:absolute;left:1083px;top:272px;" width="28" height="26" viewBox="0 0 28 26"><path d="M6 1.5h16M6.5 0v3M21.5 0v3" stroke="#2e75b6" stroke-width="1" shape-rendering="crispEdges"/><rect x="0.5" y="4.5" width="27" height="20" fill="#fff"/><rect x="8.5" y="11.5" width="12" height="6" fill="#6aa9e6"/><path d="M0.5 4.5h27v20h-27z M0.5 11.5h27M0.5 17.5h27M8.5 4.5v20M20.5 4.5v20" stroke="#444" stroke-width="1" fill="none" shape-rendering="crispEdges"/></svg>
<div class="t" style="left:1079.00px;top:307.00px;font-size:12.50px;line-height:12.50px;color:#4a4a4a;font-weight:400;transform:scaleX(0.9220);-webkit-text-stroke:0.15px #4a4a4a;">Format</div>
<svg style="position:absolute;left:1095.1px;top:326.3px;" width="5" height="3" viewBox="0 0 5 3"><path d="M0 0h5L2.5 3z" fill="#555"/></svg>
<div class="t" style="left:1044.60px;top:345.00px;font-size:12.21px;line-height:12.21px;color:#555555;font-weight:400;transform:scaleX(0.8364);-webkit-text-stroke:0.15px #555555;">Cells</div>
<div style="position:absolute;left:1125.9px;top:269px;width:1px;height:86px;background:#d4d4d4;"></div>
<svg style="position:absolute;left:1138px;top:272px;" width="14" height="14" viewBox="0 0 14 14"><path d="M12.5 3V1H1l5.5 6L1 13h11.5v-2" fill="none" stroke="#444" stroke-width="1.1"/></svg>
<div class="t" style="left:1156.50px;top:274.00px;font-size:12.50px;line-height:12.50px;color:#4a4a4a;font-weight:400;transform:scaleX(0.9278);-webkit-text-stroke:0.15px #4a4a4a;">AutoSum</div>
<svg style="position:absolute;left:1214.5px;top:277.5px;" width="5" height="3" viewBox="0 0 5 3"><path d="M0 0h5L2.5 3z" fill="#555"/></svg>
<svg style="position:absolute;left:1137px;top:294px;" width="16" height="14" viewBox="0 0 16 14"><rect x="0.6" y="0.6" width="14.8" height="12.8" fill="#fff" stroke="#444" stroke-width="1.1"/><rect x="0.6" y="0.6" width="14.8" height="2.3" fill="#444"/><path d="M8 4.5v6.5M5.3 8.5L8 11l2.7-2.5" fill="none" stroke="#2e75b6" stroke-width="1.1"/></svg>
<div class="t" style="left:1156.50px;top:296.00px;font-size:12.50px;line-height:12.50px;color:#4a4a4a;font-weight:400;transform:scaleX(0.8708);-webkit-text-stroke:0.15px #4a4a4a;">Fill</div>
<svg style="position:absolute;left:1173.2px;top:300.0px;" width="5" height="3" viewBox="0 0 5 3"><path d="M0 0h5L2.5 3z" fill="#555"/></svg>
<svg style="position:absolute;left:1137px;top:316px;" width="16" height="15" viewBox="0 0 16 15"><path d="M0.8 10L8.8 1.5l6 6-8 6.8z" fill="#fff" stroke="#b04fc4" stroke-width="1.3"/><path d="M0.8 10l4 4 3.5-3-4-4z" fill="#d070e0"/></svg>
<div class="t" style="left:1156.50px;top:318.00px;font-size:12.50px;line-height:12.50px;color:#4a4a4a;font-weight:400;transform:scaleX(0.8536);-webkit-text-stroke:0.15px #4a4a4a;">Clear</div>
<svg style="position:absolute;left:1184.8px;top:322.5px;" width="5" height="3" viewBox="0 0 5 3"><path d="M0 0h5L2.5 3z" fill="#555"/></svg>
<svg style="position:absolute;left:1230px;top:273px;" width="30" height="28" viewBox="0 0 30 28"><text x="0" y="11.8" font-size="15.5" fill="#2e75b6" font-family="Liberation Sans">A</text><text x="0.5" y="26.3" font-size="15.5" fill="#444" font-family="Liberation Sans">Z</text><path d="M13.5 7h15L23.5 14v8.5h-4V14z" fill="none" stroke="#444" stroke-width="1.2"/></svg>
<div class="t" style="left:1228.30px;top:306.00px;font-size:12.50px;line-height:12.50px;color:#4a4a4a;font-weight:400;transform:scaleX(0.9413);-webkit-text-stroke:0.15px #4a4a4a;">Sort &amp;</div>
<div class="t" style="left:1228.30px;top:322.00px;font-size:12.50px;line-height:12.50px;color:#4a4a4a;font-weight:400;transform:scaleX(0.9001);-webkit-text-stroke:0.15px #4a4a4a;">Filter</div>
<svg style="position:absolute;left:1256.5px;top:326.5px;" width="5" height="3" viewBox="0 0 5 3"><path d="M0 0h5L2.5 3z" fill="#555"/></svg>
<svg style="position:absolute;left:1271px;top:272px;" width="32" height="30" viewBox="0 0 32 30"><circle cx="19.5" cy="11.2" r="10.2" fill="none" stroke="#555" stroke-width="1.2"/><path d="M12.5 18.5L1.5 29" stroke="#555" stroke-width="1.3"/></svg>
<div class="t" style="left:1269.50px;top:306.00px;font-size:12.50px;line-height:12.50px;color:#4a4a4a;font-weight:400;transform:scaleX(0.9550);-webkit-text-stroke:0.15px #4a4a4a;">Find &amp;</div>
<div class="t" style="left:1267.70px;top:322.00px;font-size:12.50px;line-height:12.50px;color:#4a4a4a;font-weight:400;transform:scaleX(0.8723);-webkit-text-stroke:0.15px #4a4a4a;">Select</div>
<svg style="position:absolute;left:1300.8px;top:326.5px;" width="5" height="3" viewBox="0 0 5 3"><path d="M0 0h5L2.5 3z" fill="#555"/></svg>
<div class="t" style="left:1203.40px;top:344.00px;font-size:12.21px;line-height:12.21px;color:#555555;font-weight:400;transform:scaleX(0.9374);-webkit-text-stroke:0.15px #555555;">Editing</div>
<div style="position:absolute;left:1315.6px;top:269px;width:1px;height:86px;background:#d4d4d4;"></div>
<div style="position:absolute;left:32px;top:359px;width:1302px;height:65px;background:#e6e6e6;"></div>
<div style="position:absolute;left:32px;top:358.6px;width:1302px;height:1px;background:#d6d6d6;"></div>
<div style="position:absolute;left:32px;top:370.6px;width:94.2px;height:24.4px;background:#fff;border:1px solid #d0d0d0;border-left:none;box-sizing:border-box;"></div>
<div class="t" style="left:34.20px;top:378.00px;font-size:12.79px;line-height:12.79px;color:#444444;font-weight:400;transform:scaleX(0.9845);">A6</div>
<svg style="position:absolute;left:113.7px;top:380.2px;" width="6" height="3" viewBox="0 0 6 3"><path d="M0 0h6L3 3z" fill="#666"/></svg>
<div style="position:absolute;left:141px;top:378.5px;width:2px;height:2px;background:#a0a0a0;"></div>
<div style="position:absolute;left:141px;top:382.5px;width:2px;height:2px;background:#a0a0a0;"></div>
<div style="position:absolute;left:141px;top:386.5px;width:2px;height:2px;background:#a0a0a0;"></div>
<div style="position:absolute;left:156.7px;top:370.6px;width:106.6px;height:24.4px;background:#fff;border:1px solid #d0d0d0;box-sizing:border-box;"></div>
<svg style="position:absolute;left:170px;top:377.8px;" width="11" height="10" viewBox="0 0 11 10"><path d="M0.8 0.8l9.4 8.4M10.2 0.8L0.8 9.2" stroke="#b4b4b4" stroke-width="1.2"/></svg>
<svg style="position:absolute;left:204px;top:378px;" width="13" height="10" viewBox="0 0 13 10"><path d="M0.8 5.5l3.8 3.6L12 0.8" fill="none" stroke="#b4b4b4" stroke-width="1.3"/></svg>
<div class="t" style="left:239.40px;top:378.00px;font-size:12.50px;line-height:12.50px;color:#666666;font-weight:400;transform:scaleX(1.2853);"><i>f</i><span style="font-size:70%"><i>x</i></span></div>
<div style="position:absolute;left:268px;top:370.6px;width:1080px;height:24.4px;background:#fff;border:1px solid #d0d0d0;border-right:none;box-sizing:border-box;"></div>
<div style="position:absolute;left:32px;top:405.5px;width:1302px;height:18.5px;background:#e6e6e6;"></div>
<div style="position:absolute;left:32px;top:423px;width:1302px;height:1px;background:#bdbdbd;"></div>
<div style="position:absolute;left:47.5px;top:405.5px;width:145px;height:17.5px;background:#d2d2d2;"></div>
<svg style="position:absolute;left:33.5px;top:409px;" width="11" height="12" viewBox="0 0 11 12"><path d="M10.5 0.5V11.5H0.5z" fill="#c4c4c4"/></svg>
<div class="t" style="left:115.95px;top:410.00px;font-size:11.05px;line-height:11.05px;color:#217346;font-weight:400;">A</div>
<div style="position:absolute;left:192.4px;top:405.5px;width:1px;height:17.5px;background:linear-gradient(#e6e6e6,#c4c4c4 40%,#bdbdbd);"></div>
<div class="t" style="left:233.35px;top:410.00px;font-size:11.05px;line-height:11.05px;color:#444444;font-weight:400;">B</div>
<div style="position:absolute;left:282.3px;top:405.5px;width:1px;height:17.5px;background:linear-gradient(#e6e6e6,#c4c4c4 40%,#bdbdbd);"></div>
<div class="t" style="left:309.40px;top:410.00px;font-size:11.05px;line-height:11.05px;color:#444444;font-weight:400;">C</div>
<div style="position:absolute;left:344.5px;top:405.5px;width:1px;height:17.5px;background:linear-gradient(#e6e6e6,#c4c4c4 40%,#bdbdbd);"></div>
<div class="t" style="left:371.95px;top:410.00px;font-size:11.05px;line-height:11.05px;color:#444444;font-weight:400;">D</div>
<div style="position:absolute;left:407.4px;top:405.5px;width:1px;height:17.5px;background:linear-gradient(#e6e6e6,#c4c4c4 40%,#bdbdbd);"></div>
<div class="t" style="left:434.70px;top:410.00px;font-size:11.05px;line-height:11.05px;color:#444444;font-weight:400;">E</div>
<div style="position:absolute;left:470px;top:405.5px;width:1px;height:17.5px;background:linear-gradient(#e6e6e6,#c4c4c4 40%,#bdbdbd);"></div>
<div class="t" style="left:543.25px;top:410.00px;font-size:11.05px;line-height:11.05px;color:#444444;font-weight:400;">F</div>
<div style="position:absolute;left:624.5px;top:405.5px;width:1px;height:17.5px;background:linear-gradient(#e6e6e6,#c4c4c4 40%,#bdbdbd);"></div>
<div class="t" style="left:988.75px;top:410.00px;font-size:11.05px;line-height:11.05px;color:#444444;font-weight:400;">G</div>
<div style="position:absolute;left:32px;top:424px;width:15.5px;height:139px;background:#e6e6e6;"></div>
<div style="position:absolute;left:47px;top:424px;width:0.8px;height:139px;background:#c4c4c4;"></div>
<div style="position:absolute;left:32px;top:522.65px;width:15.5px;height:19.1px;background:#d2d2d2;"></div>
<div style="position:absolute;left:46px;top:522.15px;width:2px;height:19.63px;background:#217346;"></div>
<div style="position:absolute;left:32px;top:443.1px;width:15.5px;height:0.8px;background:#d8d8d8;"></div>
<div class="t" style="left:31.20px;top:429.00px;font-size:12.21px;line-height:12.21px;color:#444444;font-weight:400;">1</div>
<div style="position:absolute;left:32px;top:462.73px;width:15.5px;height:0.8px;background:#d8d8d8;"></div>
<div class="t" style="left:31.20px;top:449.00px;font-size:12.21px;line-height:12.21px;color:#444444;font-weight:400;">2</div>
<div style="position:absolute;left:32px;top:482.36px;width:15.5px;height:0.8px;background:#d8d8d8;"></div>
<div class="t" style="left:31.20px;top:468.00px;font-size:12.21px;line-height:12.21px;color:#444444;font-weight:400;">3</div>
<div style="position:absolute;left:32px;top:501.99px;width:15.5px;height:0.8px;background:#d8d8d8;"></div>
<div class="t" style="left:31.20px;top:488.00px;font-size:12.21px;line-height:12.21px;color:#444444;font-weight:400;">4</div>
<div style="position:absolute;left:32px;top:521.62px;width:15.5px;height:0.8px;background:#d8d8d8;"></div>
<div class="t" style="left:31.20px;top:508.00px;font-size:12.21px;line-height:12.21px;color:#444444;font-weight:400;">5</div>
<div style="position:absolute;left:32px;top:541.25px;width:15.5px;height:0.8px;background:#d8d8d8;"></div>
<div class="t" style="left:31.20px;top:527.00px;font-size:12.21px;line-height:12.21px;color:#217346;font-weight:400;">6</div>
<div style="position:absolute;left:32px;top:560.88px;width:15.5px;height:0.8px;background:#d8d8d8;"></div>
<div class="t" style="left:31.20px;top:547.00px;font-size:12.21px;line-height:12.21px;color:#444444;font-weight:400;">7</div>
<div style="position:absolute;left:48px;top:424px;width:1286px;height:139px;background:#fff;"></div>
<div style="position:absolute;left:47.5px;top:424px;width:297px;height:19.629999999999995px;background:#93b1da;"></div>
<div style="position:absolute;left:47.5px;top:423px;width:145px;height:2px;background:#217346;"></div>
<div style="position:absolute;left:47.5px;top:443.13px;width:297.5px;height:1.1px;background:#44608a;"></div>
<div style="position:absolute;left:47.5px;top:462.76px;width:297.5px;height:1.1px;background:#44608a;"></div>
<div style="position:absolute;left:47.5px;top:482.39px;width:297.5px;height:1.1px;background:#44608a;"></div>
<div style="position:absolute;left:47.5px;top:502.02px;width:297.5px;height:1.1px;background:#44608a;"></div>
<div style="position:absolute;left:47.5px;top:521.65px;width:297.5px;height:1.1px;background:#44608a;"></div>
<div style="position:absolute;left:191.9px;top:424px;width:1.1px;height:98.64999999999998px;background:#44608a;"></div>
<div style="position:absolute;left:281.8px;top:424px;width:1.1px;height:98.64999999999998px;background:#44608a;"></div>
<div style="position:absolute;left:344.0px;top:424px;width:1.1px;height:98.64999999999998px;background:#44608a;"></div>
<div style="position:absolute;left:46.4px;top:521.2px;width:146.6px;height:21.4px;border:2px solid #27794a;box-sizing:border-box;"></div>
<div style="position:absolute;left:188.5px;top:538.2px;width:2px;height:3px;background:#fff;"></div>
<div style="position:absolute;left:190px;top:539.3px;width:4.6px;height:4.6px;background:#27794a;"></div>
<div class="t" style="left:85.20px;top:428.00px;font-size:13.08px;line-height:13.08px;color:#1b1b2b;font-weight:700;transform:scaleX(0.9830);">Field Name</div>
<div class="t" style="left:205.00px;top:428.00px;font-size:13.08px;line-height:13.08px;color:#1b1b2b;font-weight:700;transform:scaleX(0.9677);">Pivot Field</div>
<div class="t" style="left:287.50px;top:428.00px;font-size:13.08px;line-height:13.08px;color:#1b1b2b;font-weight:700;transform:scaleX(0.9599);">Function</div>
<div class="t" style="left:199.50px;top:448.00px;font-size:13.08px;line-height:13.08px;color:#333333;font-weight:400;transform:scaleX(1.0559);">Report Filter</div>
<div class="t" style="left:196.40px;top:468.00px;font-size:13.08px;line-height:13.08px;color:#333333;font-weight:400;transform:scaleX(1.0160);">Column Label</div>
<div class="t" style="left:206.70px;top:487.00px;font-size:13.08px;line-height:13.08px;color:#333333;font-weight:400;transform:scaleX(0.9837);">Row Label</div>
<div class="t" style="left:217.50px;top:507.00px;font-size:13.08px;line-height:13.08px;color:#333333;font-weight:400;transform:scaleX(1.0379);">Values</div>
<div style="position:absolute;left:470px;top:443.63px;width:154.5px;height:117.77999999999997px;background:#93b1da;"></div>
<div style="position:absolute;left:470px;top:443.13px;width:864px;height:1.1px;background:#44608a;"></div>
<div style="position:absolute;left:470px;top:462.76px;width:864px;height:1.1px;background:#44608a;"></div>
<div style="position:absolute;left:470px;top:482.39px;width:864px;height:1.1px;background:#44608a;"></div>
<div style="position:absolute;left:470px;top:502.02px;width:864px;height:1.1px;background:#44608a;"></div>
<div style="position:absolute;left:470px;top:521.65px;width:864px;height:1.1px;background:#44608a;"></div>
<div style="position:absolute;left:470px;top:541.28px;width:864px;height:1.1px;background:#44608a;"></div>
<div style="position:absolute;left:470px;top:560.91px;width:864px;height:1.1px;background:#44608a;"></div>
<div style="position:absolute;left:469.5px;top:443.63px;width:1.1px;height:117.77999999999997px;background:#44608a;"></div>
<div style="position:absolute;left:624.0px;top:443.63px;width:1.1px;height:117.77999999999997px;background:#44608a;"></div>
<div class="t" style="left:494.30px;top:448.00px;font-size:13.08px;line-height:13.08px;color:#1b1b2b;font-weight:700;transform:scaleX(0.9780);">Pivot Table Name</div>
<div class="t" style="left:476.00px;top:467.00px;font-size:13.08px;line-height:13.08px;color:#1b1b2b;font-weight:700;transform:scaleX(0.9760);">Pivot Table Sheet Name</div>
<div class="t" style="left:519.00px;top:487.00px;font-size:13.08px;line-height:13.08px;color:#1b1b2b;font-weight:700;transform:scaleX(0.9282);">Data Path</div>
<div class="t" style="left:495.50px;top:507.00px;font-size:13.08px;line-height:13.08px;color:#1b1b2b;font-weight:700;transform:scaleX(0.9731);">Data Sheet Name</div>
<div class="t" style="left:492.00px;top:526.00px;font-size:13.08px;line-height:13.08px;color:#1b1b2b;font-weight:700;transform:scaleX(0.9287);">Macro Book Name</div>
<div class="t" style="left:497.50px;top:546.00px;font-size:13.08px;line-height:13.08px;color:#1b1b2b;font-weight:700;transform:scaleX(0.9388);">Error Description</div>
<div style="position:absolute;left:1334px;top:212px;width:32px;height:352px;background:#202020;"></div>
<div style="position:absolute;left:0px;top:728px;width:1366px;height:40px;background:#1d211f;"></div>
<div style="position:absolute;left:151px;top:766px;width:32px;height:2px;background:#a3aba5;"></div>
<div style="position:absolute;left:297px;top:766px;width:41px;height:2px;background:#a3aba5;"></div>
<div style="position:absolute;left:347px;top:766px;width:39.5px;height:2px;background:#a3aba5;"></div>
<div style="position:absolute;left:396px;top:766px;width:31.5px;height:2px;background:#a3aba5;"></div>
<div style="position:absolute;left:445px;top:766px;width:40px;height:2px;background:#a3aba5;"></div>
<div style="position:absolute;left:592px;top:766px;width:40.5px;height:2px;background:#a3aba5;"></div>
<div style="position:absolute;left:641px;top:766px;width:40px;height:2px;background:#a3aba5;"></div>
<div style="position:absolute;left:690px;top:766px;width:40px;height:2px;background:#a3aba5;"></div>
<div style="position:absolute;left:183px;top:766px;width:7px;height:2px;background:#6d726e;"></div>
<div style="position:absolute;left:427.5px;top:766px;width:7.5px;height:2px;background:#6d726e;"></div>
<div style="position:absolute;left:735px;top:728px;width:47.4px;height:40px;background:#3a3e3b;"></div>
<div style="position:absolute;left:735px;top:766px;width:47.4px;height:2px;background:#a3aba5;"></div>
<svg style="position:absolute;left:16px;top:740px;" width="16" height="16" viewBox="0 0 16 16"><path d="M0 0H7.3V7.3H0zM8.3 0H16V7.3H8.3zM0 8.3H7.3V16H0zM8.3 8.3H16V16H8.3z" fill="#fff"/></svg>
<svg style="position:absolute;left:63px;top:739px;" width="18" height="18" viewBox="0 0 18 18"><circle cx="11" cy="7" r="5.8" fill="none" stroke="#fff" stroke-width="1.2"/><path d="M6.8 11.2L0.8 17.2" stroke="#fff" stroke-width="1.3"/></svg>
<svg style="position:absolute;left:111px;top:740px;" width="17" height="16" viewBox="0 0 17 16"><path d="M0.6 0v2.5M0.6 13.5v2.5M12 0v2.5M12 13.5v2.5M0.6 0.6H12M0.6 15.4H12M2.6 4.5h7.4v7H2.6z" fill="none" stroke="#fff" stroke-width="1.1"/><path d="M15.5 0.5v2M15.5 5v6M15.5 13.5v2" stroke="#fff" stroke-width="1.2"/></svg>
<svg style="position:absolute;left:159px;top:738px;" width="23" height="19" viewBox="0 0 23 19"><path d="M0.5 1.5h7l2 2h13v15H0.5z" fill="#f0c860"/><path d="M0.5 5h22v13.5H0.5z" fill="#f8d878"/><path d="M3 18.5V12.5h17v6h-4v-3h-9v3z" fill="#3aa0e0"/></svg>
<svg style="position:absolute;left:209px;top:737px;" width="22" height="21" viewBox="0 0 22 21"><path d="M2 9C3 3 7.5 0.5 11.5 0.5c6 0 9.5 4 9.5 9v2.5H7c0.3 3.5 3 5.5 6.5 5.5 2.8 0 5-1 7-2.3v4.6c-2 1.2-4.6 1.7-7.5 1.7C6.5 21.5 2.5 17.5 2.5 12c0-2.2 1-4.3 2.6-5.6C4 7 3 8 2 9zM7.3 8.5h8.2c0-2.5-1.8-4-4-4-2.3 0-4 1.5-4.2 4z" fill="#1c7ddc"/></svg>
<svg style="position:absolute;left:256px;top:738px;" width="25" height="19" viewBox="0 0 25 19"><path d="M0.5 7L12.5 0.5 24.5 7v11.5H0.5z" fill="#fff"/><path d="M3 7.5L20 6.5 14.5 9.5 17 13z" fill="#1d211f"/></svg>
<svg style="position:absolute;left:306px;top:737px;" width="23" height="23" viewBox="0 0 23 23"><circle cx="11.5" cy="11.5" r="11" fill="#db4437"/><path d="M11.5 11.5L22 8.2A11 11 0 0 1 8 22z" fill="#fbc02d"/><path d="M11.5 11.5L8 22A11 11 0 0 1 2 5z" fill="#0f9d58"/><circle cx="11.5" cy="11.5" r="5" fill="#fff"/><circle cx="11.5" cy="11.5" r="4" fill="#4285f4"/></svg>
<svg style="position:absolute;left:354px;top:737px;" width="25" height="22" viewBox="0 0 25 22"><rect x="9" y="5" width="15" height="12" fill="#0a64c8"/><path d="M10 7l7 5 7-5" fill="none" stroke="#fff" stroke-width="1.2"/><path d="M0.5 3L13 0.5v21L0.5 19z" fill="#0a5fc0"/><ellipse cx="6.8" cy="11" rx="3.2" ry="4" fill="none" stroke="#fff" stroke-width="1.7"/></svg>
<svg style="position:absolute;left:404px;top:737px;" width="27" height="24" viewBox="0 0 27 24"><circle cx="11" cy="11" r="10" fill="#1da1e2"/><circle cx="6" cy="5" r="4.5" fill="#1da1e2"/><circle cx="16" cy="17" r="4.5" fill="#1da1e2"/><text x="6" y="17" font-size="15" font-weight="700" fill="#fff" font-family="Liberation Sans">S</text><circle cx="20.5" cy="18.5" r="5" fill="#e00b1c" stroke="#1e201f" stroke-width="1.2"/></svg>
<svg style="position:absolute;left:453px;top:737px;" width="24" height="24" viewBox="0 0 24 24"><circle cx="12" cy="12" r="11.5" fill="#5bc0e0"/><circle cx="12" cy="12" r="9" fill="#0c4c7a"/><circle cx="12" cy="11.5" r="7" fill="#fff"/><path d="M8 16c2-5 6-8 10-8-1 5-4 9-10 8z" fill="#4caf50"/></svg>
<svg style="position:absolute;left:502px;top:737px;" width="24" height="23" viewBox="0 0 24 23"><path d="M0.5 2.5L13 0.5v22L0.5 20.5z" fill="#7b2f92"/><rect x="12" y="4" width="11" height="15" fill="#fff"/><path d="M14 7h8M14 10h8M14 13h8M14 16h8" stroke="#7b2f92" stroke-width="1.2"/><text x="3.5" y="15.5" font-size="9" font-weight="700" fill="#fff" font-family="Liberation Sans">N</text></svg>
<svg style="position:absolute;left:551px;top:736px;" width="24" height="24" viewBox="0 0 24 24"><rect width="24" height="24" fill="#1f76c6"/><text x="3" y="19" font-size="16" fill="#fff" font-family="Liberation Sans">Ui</text></svg>
<svg style="position:absolute;left:599px;top:737px;" width="26" height="24" viewBox="0 0 26 24"><circle cx="18" cy="4.5" r="3.5" fill="#7b83eb"/><circle cx="22" cy="8" r="2.5" fill="#5b5fc7"/><rect x="12" y="8" width="12" height="11" rx="3" fill="#7b83eb"/><rect x="1" y="5" width="13" height="13" fill="#4b53bc"/><text x="4.3" y="15.5" font-size="9.5" font-weight="700" fill="#fff" font-family="Liberation Sans">T</text><circle cx="20" cy="19" r="5" fill="#92c353" stroke="#1e201f" stroke-width="1"/><path d="M17.5 19l1.8 1.8 3.4-3.4" fill="none" stroke="#fff" stroke-width="1.2"/></svg>
<svg style="position:absolute;left:649px;top:737px;" width="24" height="24" viewBox="0 0 24 24"><circle cx="12" cy="12" r="11.5" fill="#0b5e8a"/><circle cx="12" cy="12" r="10" fill="#2bb5d8"/><circle cx="12" cy="12" r="7" fill="#fff"/><path d="M7 15c3 0 7-2 9-7 1 5-3 9-9 7z" fill="#9bd6e8"/></svg>
<svg style="position:absolute;left:699px;top:736px;" width="22" height="23" viewBox="0 0 22 23"><rect width="22" height="23" fill="#d1131c"/><path d="M4 17c3-2 5-7 6-12 0.5 3 3 8 8 8-4 0-10 2-14 4z" fill="none" stroke="#fff" stroke-width="1.2"/></svg>
<svg style="position:absolute;left:748px;top:737px;" width="22" height="22" viewBox="0 0 22 22"><rect x="0" y="0" width="22" height="22" fill="#fff"/><path d="M2 2h18v14.5l-3-4-2.2 3L8.5 7 2 15.5z" fill="#3a3e3b"/></svg>
<svg style="position:absolute;left:1037px;top:739px;" width="16" height="16" viewBox="0 0 16 16"><circle cx="10.5" cy="3.5" r="2.8" fill="none" stroke="#fff" stroke-width="1.1"/><path d="M6 11c0.5-2.5 2-4 4.5-4s4 1.5 4.5 4" fill="none" stroke="#fff" stroke-width="1.1"/><circle cx="4.8" cy="8.5" r="2.6" fill="none" stroke="#fff" stroke-width="1.1"/><path d="M0.6 15.5c0.4-2.6 2-4 4.2-4s3.8 1.4 4.2 4" fill="none" stroke="#fff" stroke-width="1.1"/></svg>
<svg style="position:absolute;left:1074px;top:743px;" width="14" height="9" viewBox="0 0 14 9"><path d="M0.8 8L7 1.5 13.2 8" fill="none" stroke="#fff" stroke-width="1.2"/></svg>
<svg style="position:absolute;left:1097px;top:740px;" width="16" height="16" viewBox="0 0 16 16"><circle cx="8" cy="8" r="7.5" fill="#5a9bd5"/><path d="M1 7c3-4 8-5 13-2-3 1-5 4-6 9-3-2-5-4-7-7z" fill="#e8e8e8"/><path d="M5 12c3 1 7 0 9-4" fill="none" stroke="#4caf50" stroke-width="1.3"/></svg>
<svg style="position:absolute;left:1122px;top:743px;" width="16" height="11" viewBox="0 0 16 11"><path d="M0.6 0.6h13v9.8H0.6z" fill="none" stroke="#fff" stroke-width="1.1"/><rect x="14" y="3.5" width="1.6" height="4" fill="#fff"/><rect x="2.5" y="2.5" width="4" height="6" fill="#fff"/></svg>
<svg style="position:absolute;left:1144px;top:743px;" width="18" height="11" viewBox="0 0 18 11"><path d="M3.5 10.5h12c1.5 0 2.3-1 2.3-2.3 0-1.5-1-2.4-2.4-2.4C15 2.8 12.8 0.5 10 0.5 7.5 0.5 6 2 5.2 3.8 2.5 3.8 0.5 5.5 0.5 7.5s1.3 3 3 3z" fill="#1e88e5"/></svg>
<svg style="position:absolute;left:1171px;top:742px;" width="14" height="14" viewBox="0 0 14 14"><path d="M1 13A12 12 0 0 1 13 1M3.5 13A9.5 9.5 0 0 1 13 3.5M6 13A7 7 0 0 1 13 6M8.5 13A4.5 4.5 0 0 1 13 8.5" fill="none" stroke="#8a8a8a" stroke-width="0.9"/><path d="M10.8 13A2.2 2.2 0 0 1 13 10.8V13z" fill="#fff"/></svg>
<svg style="position:absolute;left:1192px;top:740px;" width="18" height="16" viewBox="0 0 18 16"><path d="M0.6 5.2h3.2L8.5 0.8v14.4L3.8 10.8H0.6z" fill="none" stroke="#fff" stroke-width="1.1"/><path d="M11 5c1 1.5 1 4.5 0 6" fill="none" stroke="#fff" stroke-width="1.1"/><path d="M13.5 3c1.8 2.5 1.8 7.5 0 10" fill="none" stroke="#fff" stroke-width="1.1"/><path d="M16 1c2.5 3.5 2.5 10.5 0 14" fill="none" stroke="#8a8a8a" stroke-width="1"/></svg>
<div class="t" style="left:1219.30px;top:734.00px;font-size:12.21px;line-height:12.21px;color:#ffffff;font-weight:400;transform:scaleX(0.8504);">ENG</div>
<div class="t" style="left:1225.00px;top:751.00px;font-size:12.21px;line-height:12.21px;color:#ffffff;font-weight:400;transform:scaleX(0.9419);">IN</div>
<div class="t" style="left:1256.80px;top:734.00px;font-size:12.21px;line-height:12.21px;color:#ffffff;font-weight:400;transform:scaleX(0.9344);">10:58 AM</div>
<div class="t" style="left:1254.70px;top:751.00px;font-size:12.21px;line-height:12.21px;color:#ffffff;font-weight:400;transform:scaleX(0.9791);">2/11/2020</div>
<svg style="position:absolute;left:1325px;top:739px;" width="16" height="17" viewBox="0 0 16 17"><path d="M0.5 0.5h15v11.5H10l-2 3.5-2-3.5H0.5z" fill="#fff"/><path d="M3 3.5h10M3 6h10M3 8.5h7" stroke="#1e201f" stroke-width="1"/></svg>
<div style="position:absolute;left:1361.5px;top:728px;width:1px;height:40px;background:#5a5a5a;"></div>
</body></html>
